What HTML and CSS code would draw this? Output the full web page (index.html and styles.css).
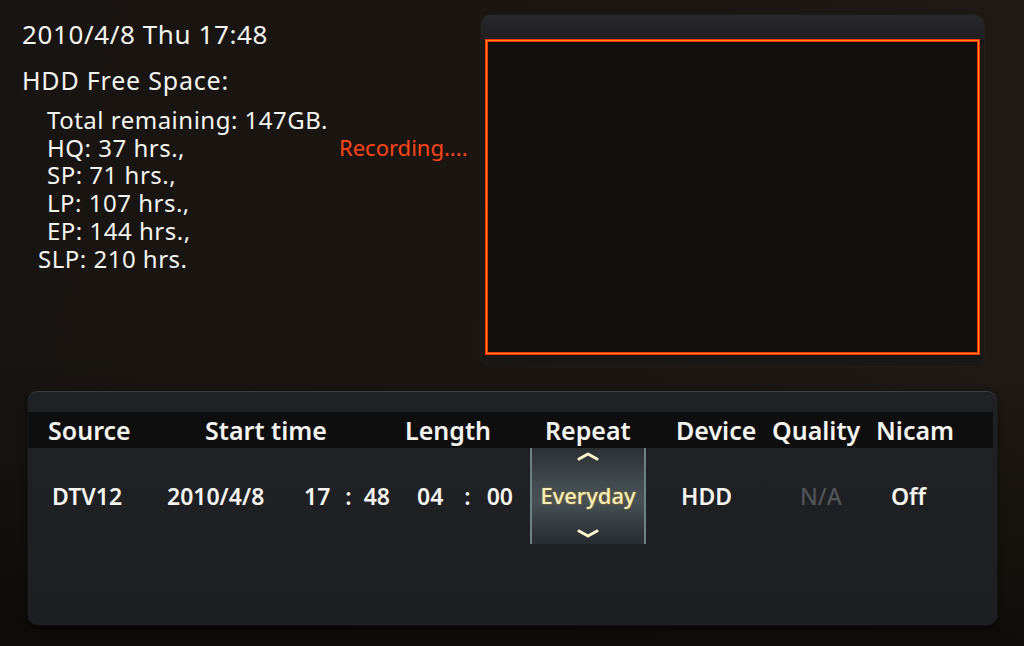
FILE: index.html
```html
<!DOCTYPE html>
<html lang="en">
<head>
    <title>Timer Recording</title>
    <meta charset="utf-8">
    <meta name="viewport" content="width=device-width, initial-scale=1.0">
    <link rel="stylesheet" href="styles.css">
</head>
<body>
    <div class="screen">
        <!-- Top: clock, disk space and live preview -->
        <div class="top">
            <section class="info">
                <p class="clock">2010/4/8 Thu 17:48</p>
                <p class="hdd-title">HDD Free Space:</p>
                <div class="space-row">
                    <ul class="stats">
                        <li>Total remaining: 147GB.</li>
                        <li>HQ: 37 hrs.,</li>
                        <li>SP: 71 hrs.,</li>
                        <li>LP: 107 hrs.,</li>
                        <li>EP: 144 hrs.,</li>
                        <li class="slp">SLP: 210 hrs.</li>
                    </ul>
                    <p class="status">Recording....</p>
                </div>
            </section>

            <section class="preview">
                <div class="preview-bar"></div>
                <div class="frame"></div>
            </section>
        </div>

        <!-- Bottom: timer entry -->
        <div class="timer">
            <div class="head">
                <span class="h-source">Source</span>
                <span class="h-start">Start time</span>
                <span class="h-length">Length</span>
                <span class="h-repeat">Repeat</span>
                <span class="h-device">Device</span>
                <span class="h-quality">Quality</span>
                <span class="h-nicam">Nicam</span>
            </div>
            <div class="entry">
                <span class="c-source">DTV12</span>
                <span class="c-date">2010/4/8</span>
                <span class="c-time"><span>17</span><span class="colon">:</span><span>48</span></span>
                <span class="c-length"><span>04</span><span class="colon">:</span><span>00</span></span>
                <div class="spinner">
                    <svg class="chev" width="22" height="10" viewBox="0 0 22 10">
                        <path d="M2 8 L11 3 L20 8" fill="none" stroke="#fff6d0" stroke-width="3" stroke-linecap="round" stroke-linejoin="round"/>
                    </svg>
                    <span class="value">Everyday</span>
                    <svg class="chev" width="22" height="10" viewBox="0 0 22 10">
                        <path d="M2 2 L11 7 L20 2" fill="none" stroke="#fff6d0" stroke-width="3" stroke-linecap="round" stroke-linejoin="round"/>
                    </svg>
                </div>
                <span class="c-device">HDD</span>
                <span class="c-quality">N/A</span>
                <span class="c-nicam">Off</span>
            </div>
        </div>
    </div>
</body>
</html>
```

FILE: styles.css
```css
/* General styles */
body {
    margin: 0;
    padding: 0;
    width: 1024px;
    height: 646px;
    overflow: hidden;
    font-family: 'Noto Sans', 'Open Sans', sans-serif;
    color: #f5f4f0;
    background: linear-gradient(100deg, #181411 0%, #1b1612 60%, #201a15 100%);
}

p, ul {
    margin: 0;
    padding: 0;
}

.screen {
    display: flex;
    flex-direction: column;
    height: 100%;
    background: linear-gradient(to bottom, transparent 55%, rgba(8, 8, 6, 0.7) 100%);
}

/* Top area */
.top {
    display: flex;
    padding: 15px 40px 0 22px;
}

.info {
    flex: 1;
    padding-top: 2px;
}

.clock {
    font-size: 26px;
    letter-spacing: 0.6px;
    line-height: 34px;
}

.hdd-title {
    margin-top: 13px;
    font-size: 25px;
    letter-spacing: 0.8px;
    line-height: 32px;
}

.space-row {
    display: flex;
    margin-top: 10px;
}

.stats {
    list-style: none;
    width: 292px;
    padding-left: 25px;
    font-size: 24px;
    letter-spacing: 0.5px;
    line-height: 27.7px;
}

.stats .slp {
    margin-left: -9px;
}

.status {
    margin-top: 28px;
    font-size: 22px;
    line-height: 27.7px;
    color: #ff4418;
}

/* Preview window */
.preview {
    width: 503px;
    height: 351px;
    border-radius: 9px;
    background: #1a1816;
    box-shadow: 0 0 3px rgba(60, 60, 60, 0.4);
    display: flex;
    flex-direction: column;
}

.preview-bar {
    height: 25px;
    border-radius: 9px 9px 0 0;
    background: linear-gradient(to bottom, #28272a, #201f21);
}

.frame {
    height: 312px;
    margin: 0 5px;
    background: #120f0c;
    border: 1px solid #ff8a12;
    box-shadow: 0 0 0 1px #f2320e, inset 0 0 0 1px #f2320e;
}

/* Timer panel */
.timer {
    margin: 26px 27px 0 28px;
    height: 233px;
    border-radius: 10px;
    background: linear-gradient(to bottom, #202124, #1d1f22);
    box-shadow: 0 -1px 0 #3c3e42, 0 0 2px #2e3033, 0 4px 6px rgba(0, 0, 0, 0.6);
}

.head {
    display: flex;
    align-items: center;
    height: 36px;
    margin: 20px 4px 0 0;
    padding-left: 20px;
    background: #0e0e0e;
    font-size: 25px;
    font-weight: 600;
}

.head span { display: block; }
.h-source { width: 157px; }
.h-start { width: 200px; }
.h-length { width: 140px; }
.h-repeat { width: 131px; }
.h-device { width: 96px; }
.h-quality { width: 104px; }

.entry {
    display: flex;
    align-items: center;
    height: 96px;
    padding-left: 24px;
    font-size: 23px;
    font-weight: 600;
}

.entry > span { display: block; }
.c-source { width: 115px; }
.c-date { width: 137px; }

.c-time,
.c-length {
    display: flex !important;
    width: 113px;
}

.c-time .colon { margin: 0 12px 0 15px; }
.c-length .colon { margin: 0 16px 0 21px; }

.spinner {
    width: 116px;
    height: 96px;
    display: flex;
    flex-direction: column;
    align-items: center;
    justify-content: space-between;
    padding: 3px 0 5px;
    box-sizing: border-box;
    background: linear-gradient(to bottom, #2a3034 0%, #414a4f 35%, #475156 55%, #262c30 100%);
    border-left: 2px solid #6f8188;
    border-right: 2px solid #6f8188;
}

.chev {
    display: block;
}

.spinner .value {
    font-size: 22px;
    font-weight: 500;
    color: #f6ecbd;
    text-shadow: 0 0 2px #b08a20;
}

.c-device {
    width: 119px;
    margin-left: 35px;
}

.c-quality {
    width: 91px;
    font-weight: 500;
    color: #4e5458;
}
```
